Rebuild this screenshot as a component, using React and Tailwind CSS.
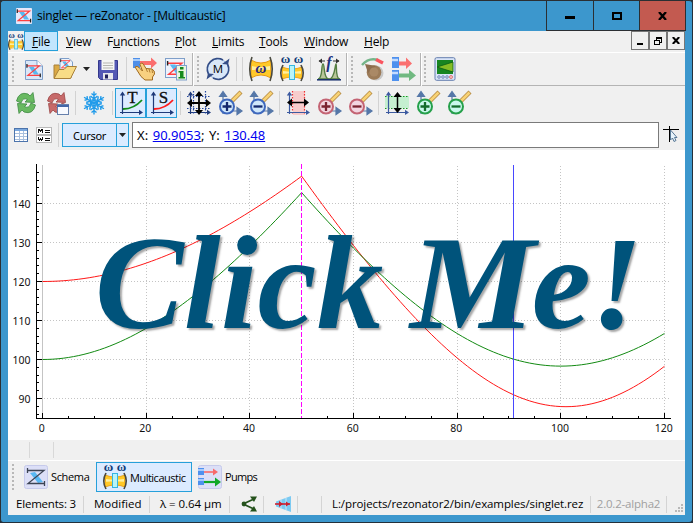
import React from "react";

const NAVY = "#1f3a7a";
const STEEL = "#5577a8";

function Svg({ size = 24, box = 24, children, crisp }) {
  return (
    <svg width={size} height={size} viewBox={`0 0 ${box} ${box}`} fill="none" className="block shrink-0 overflow-visible" shapeRendering={crisp ? "crispEdges" : "auto"}>
      {children}
    </svg>
  );
}

/* ---------- icons ---------- */

function ZMark({ x = 0, y = 0, s = 1, line = "#ff4040", ends = "#222" }) {
  return (
    <g transform={`translate(${x} ${y}) scale(${s})`}>
      <path d="M3 4 L8 4 L13.500 12 L8.500 12Z" fill="#5ab8f0" />
      <path d="M1 3H14L2 13H15" stroke={line} strokeWidth="1.3" />
      <path d="M1 1V5M15 11V15" stroke={ends} strokeWidth="1.3" />
    </g>
  );
}

const AppIcon = () => (
  <Svg size={16} box={16}>
    <rect width="16" height="16" rx="1" fill="#e6e8fb" />
    <ZMark x={0.3} y={0.2} s={0.95} />
  </Svg>
);

function Caustic({ y = 0, h = 24 }) {
  return (
    <g transform={`translate(0 ${y}) scale(1 ${h / 24})`}>
      <path d="M2 3Q12 9 22 3V21Q12 15 2 21Z" fill="#ffc928" stroke="#e89a10" strokeWidth="1" />
      <path d="M3 9Q12 11 21 9V13Q12 12 3 13Z" fill="#fff0a0" />
      <path d="M3 0Q-1.5 12 3 24M21 0Q25.5 12 21 24" stroke="#4a4a40" strokeWidth="1.6" />
    </g>
  );
}

function Omega({ x, y, size = 9 }) {
  return (
    <text x={x} y={y} fontSize={size} textAnchor="middle" fill="#103c78" className="font-['Liberation_Serif',serif] font-bold">ω</text>
  );
}

const MultiIcon = ({ size = 24 }) => (
  <Svg size={size}>
    <Omega x={5.5} y={6} size={13} />
    <Omega x={18.5} y={6} size={13} />
    <Caustic y={8} h={16} />
    <rect x="9.5" y="8.5" width="5" height="14" fill="#b8f4f8" stroke="#35b5e0" />
  </Svg>
);

const CausticIcon = () => (
  <Svg>
    <Caustic />
    <text x="12" y="16" fontSize="15" textAnchor="middle" fill="#24247c" className="font-['Liberation_Serif',serif] font-bold italic">ω</text>
  </Svg>
);

const NewIcon = () => (
  <Svg>
    <path d="M3.500 3.500H15L20.500 9V22.500H3.500Z" fill="#dbe7f8" stroke="#7f9fc9" />
    <path d="M15 3.500V9H20.500" fill="#fff" stroke="#7f9fc9" />
    <ZMark x={4} y={6} s={0.95} />
  </Svg>
);

const OpenIcon = () => (
  <Svg>
    <path d="M1 21V8H6L8 10H18V21Z" fill="#dba943" stroke="#a8803a" />
    <path d="M7 1.500H16L19.500 5V16H7Z" fill="#edf3fc" stroke="#7f9fc9" />
    <ZMark x={7} y={1.500} s={0.72} />
    <path d="M1 21.500L6 12.500H11L14 9.500H23.500L17.500 21.500Z" fill="#f8dc86" stroke="#a8803a" />
  </Svg>
);

const SaveIcon = () => (
  <Svg>
    <path d="M2.500 3.500H21.500V22.500H4.500L2.500 20.500Z" fill="#5458b4" stroke="#34388c" />
    <rect x="5.500" y="3" width="13" height="10" fill="#f6f6f4" />
    <path d="M7 6H17M7 8.500H17M7 11H17" stroke="#b5b5b0" />
    <rect x="7" y="16" width="10" height="6.500" fill="#e8e8ec" />
    <rect x="9" y="17.500" width="3" height="4" fill="#20205c" />
  </Svg>
);

const HandIcon = () => (
  <Svg>
    <rect x="0" y="1" width="7" height="10" fill="#4f8fe8" />
    <path d="M0 3H7" stroke="#a9cdfa" strokeWidth="2" />
    <path d="M7 4H18V0.500L24 6L18 11.500V8H7Z" fill="#fb6e6e" />
    <path d="M2 10Q4 8.500 6 10.500L9.500 14L7 7.500Q8 5 10 6.500L13 11.500L19 12Q22 13.500 21.500 17L19.500 20V23H12L8 19.500Z" fill="#f8d080" stroke="#a06a20" />
    <path d="M13 11.500L14.500 15M16 12L17 15.500M19 12.500L19.500 16" stroke="#a06a20" strokeWidth=".8" />
  </Svg>
);

const InfoIcon = () => (
  <Svg>
    <rect x="1.500" y="1.500" width="19" height="19" fill="#eef2fc" stroke="#7f9fc9" />
    <ZMark x={2.500} y={3} s={1.1} />
    <rect x="12.500" y="8.500" width="10" height="14.500" fill="#e9f6df" stroke="#7f9fc9" />
    <path d="M16 10H19.500V12.500H16ZM14.500 14H19.500V20H21V21.500H14.500V20H16V15.500H14.500Z" fill="#158a1c" />
  </Svg>
);

const MatrixIcon = () => (
  <Svg>
    <circle cx="12" cy="12" r="10.200" fill="#d9e7f8" stroke="#8fb0dc" />
    <path d="M2.500 17A10.500 10.500 0 0 1 17 3" stroke="#344d86" strokeWidth="1.700" />
    <path d="M21.500 7A10.500 10.500 0 0 1 7 21" stroke="#344d86" strokeWidth="1.700" />
    <path d="M16 7L22 7.500L23.500 1.500ZM8 17L2 16.500L.5 22.500Z" fill="#344d86" />
    <text x="12" y="16" fontSize="11.500" textAnchor="middle" fill="#000" className="font-['Open_Sans',sans-serif]">M</text>
  </Svg>
);

const FreqIcon = () => (
  <Svg>
    <path d="M1 22C6 22 4 7 6 7S6 22 12 22S18 7 19 7S18 22 23 22Z" fill="#b9c69a" stroke="#547e42" strokeWidth="1.400" />
    <path d="M0 22.800H24" stroke="#152c6c" strokeWidth="1.500" />
    <path d="M2 4H8M16 4H22" stroke="#333" />
    <path d="M5 1.500L1.500 4L5 6.500M19 1.500L22.500 4L19 6.500" fill="#333" />
    <text x="12" y="11" fontSize="16" textAnchor="middle" fill="#1e3280" className="font-['Liberation_Serif',serif] font-bold italic">f</text>
  </Svg>
);

const KnobIcon = () => (
  <Svg>
    <path d="M1 8Q8 0 17 3" stroke="#75b58a" strokeWidth="2.400" />
    <path d="M15 2.500L22 6" stroke="#fa5560" strokeWidth="3.500" />
    <circle cx="15" cy="16" r="7.500" fill="#c8c8c8" />
    <circle cx="13" cy="15.500" r="7.300" fill="#9c7b58" />
    <path d="M4 7L15 9L7 16Z" fill="#8d6d4d" />
    <circle cx="13" cy="15" r="4.500" fill="#aa8966" />
  </Svg>
);

const PumpsIcon = () => (
  <Svg>
    <rect x="0" y="0" width="7" height="11" fill="#4e91ee" />
    <rect x="0" y="13" width="7" height="11" fill="#4e91ee" />
    <path d="M0 3H6M0 16H6" stroke="#c4dcff" strokeWidth="2.500" />
    <path d="M7 4.500H14V.5L20 6.500L14 12V8.500H7Z" fill="#fa7070" />
    <path d="M7 16.500H17V12.500L24 18.500L17 24V20.500H7Z" fill="#70b981" />
  </Svg>
);

const ScopeIcon = () => (
  <Svg>
    <rect x="2" y=".7" width="20" height="22.600" rx="1.500" fill="#d9e4f8" stroke="#657eae" />
    <rect x="4" y="3" width="16" height="14" fill="#178521" />
    <path d="M4 10L20 5V15Z" fill="#84bd25" stroke="#075f13" strokeWidth=".8" />
    {[6, 10, 14].map((x) => <circle key={x} cx={x} cy="20" r="1.300" stroke="#5c75a8" strokeWidth=".8" />)}
    <circle cx="18" cy="20" r="1.500" fill="#f8c8c8" stroke="#e05f5f" strokeWidth=".8" />
  </Svg>
);

function RefreshIcon({ a, b, win }) {
  return (
    <Svg>
      <path d="M2.500 10Q5 0 14 3L16 5L19 1.500L20.500 11.500L11 11L13.500 8.500Q9 6 7 12Z" fill={a} stroke={b} strokeWidth=".8" />
      <path d="M21.500 14Q19 24 10 21L8 19L5 22.500L3.500 12.500L13 13L10.500 15.500Q15 18 17 12Z" fill={a} stroke={b} strokeWidth=".8" />
      {win && (
        <>
          <rect x="12.500" y="13.500" width="11" height="10" fill="#f8faff" stroke="#6680ac" />
          <path d="M12 15H24" stroke="#4468a8" strokeWidth="2" />
        </>
      )}
    </Svg>
  );
}

const SnowIcon = () => (
  <Svg>
    {[0, 60, 120, 180, 240, 300].map((a) => (
      <path key={a} transform={`rotate(${a} 12 12)`} d="M12 12V.5M12 8L8.500 5M12 8L15.500 5M12 4.500L9.500 2.500M12 4.500L14.500 2.500M12 10L10 8.500M12 10L14 8.500" stroke="#209bea" strokeWidth="1.400" />
    ))}
  </Svg>
);

function Axes({ c = NAVY }) {
  return (
    <>
      <path d="M3.500 3V23M1 21.500H22" stroke={c} strokeWidth="1.200" />
      <path d="M.8 4.500L3.500 .5L6.200 4.500ZM20 18.800L24 21.500L20 24Z" fill={c} />
    </>
  );
}

function LetterIcon({ letter, curve }) {
  return (
    <Svg>
      <Axes />
      <path d="M4 18Q15 18 23 9" stroke={curve} strokeWidth="1.800" />
      <text x="13.500" y="12" fontSize="17" textAnchor="middle" fill="#111" stroke="#111" strokeWidth=".3" className="font-['Liberation_Serif',serif]">{letter}</text>
    </Svg>
  );
}

const FitAllIcon = () => (
  <Svg>
    <Axes />
    <path d="M6.500 0V24M18.500 0V24M0 5.500H24M0 17.500H24" stroke="#2548a0" strokeWidth="1.200" strokeDasharray="1.500 1.500" />
    <path d="M12 2V22M2 12H22" stroke="#000" strokeWidth="1.800" />
    <path d="M8 5L12 0L16 5ZM8 19L12 24L16 19ZM5 8L0 12L5 16ZM19 8L24 12L19 16Z" fill="#000" />
  </Svg>
);

const FitXIcon = () => (
  <Svg>
    <rect x="7" y="0" width="12" height="24" fill="#f7cccc" />
    <path d="M6.500 0V24M18.500 0V24" stroke="#f03030" strokeWidth="1.200" strokeDasharray="1.500 1.500" />
    <Axes c="#3c5aa0" />
    <path d="M3 11.500H21" stroke="#000" strokeWidth="1.500" />
    <path d="M6 7.500L1 11.500L6 15.500ZM18 7.500L23 11.500L18 15.500Z" fill="#000" />
  </Svg>
);

const FitYIcon = () => (
  <Svg>
    <rect x="0" y="5" width="24" height="12" fill="#c5efd0" />
    <path d="M0 5.500H24M0 17.500H24" stroke="#159a20" strokeWidth="1.200" strokeDasharray="1.500 1.500" />
    <Axes c="#3c5aa0" />
    <path d="M12.500 3V20" stroke="#000" strokeWidth="1.500" />
    <path d="M8.500 6L12.500 1L16.500 6ZM8.500 17L12.500 22L16.500 17Z" fill="#000" />
  </Svg>
);

function ZoomIcon({ plus, ring, fill, sign }) {
  return (
    <Svg>
      <path d="M5 23V5M1.500 5.500L5 .5L8.500 5.500Z" stroke={STEEL} fill={STEEL} strokeWidth="1.200" />
      <path d="M3 20H21M19 16.500L24 20L19 23.500Z" stroke={STEEL} fill={STEEL} strokeWidth="1.200" />
      <path d="M14 10L23 1" stroke="#b58a40" strokeWidth="4.200" />
      <path d="M14 10L22.500 1.500" stroke="#f8d274" strokeWidth="2.600" />
      <circle cx="9" cy="15.500" r="7" fill={fill} stroke={ring} strokeWidth="2" />
      <path d={plus ? "M4.500 15.500H13.500M9 11V20" : "M4.500 15.500H13.500"} stroke={sign} strokeWidth="2.300" />
    </Svg>
  );
}

function ZoomXIcon({ plus }) {
  return (
    <Svg>
      <path d="M3 20H21M19 16.500L24 20L19 23.500Z" stroke={STEEL} fill={STEEL} strokeWidth="1.200" />
      <path d="M14 10L23 1" stroke="#b58a40" strokeWidth="4.200" />
      <path d="M14 10L22.500 1.500" stroke="#f8d274" strokeWidth="2.600" />
      <circle cx="9" cy="15.500" r="7" fill="#f2d5e0" stroke="#c46474" strokeWidth="2" />
      <path d={plus ? "M4.500 15.500H13.500M9 11V20" : "M4.500 15.500H13.500"} stroke="#7a2330" strokeWidth="2.300" />
    </Svg>
  );
}

function ZoomYIcon({ plus }) {
  return (
    <Svg>
      <path d="M5 23V5M1.500 5.500L5 .5L8.500 5.500Z" stroke={STEEL} fill={STEEL} strokeWidth="1.200" />
      <path d="M14 10L23 1" stroke="#b58a40" strokeWidth="4.200" />
      <path d="M14 10L22.500 1.500" stroke="#f8d274" strokeWidth="2.600" />
      <circle cx="9" cy="15.500" r="7" fill="#c9f8ec" stroke="#25a04a" strokeWidth="2" />
      <path d={plus ? "M4.500 15.500H13.500M9 11V20" : "M4.500 15.500H13.500"} stroke="#136d2c" strokeWidth="2.300" />
    </Svg>
  );
}

const TableIcon = () => (
  <Svg size={14} box={14} crisp>
    <rect x="0" y="0" width="14" height="14" fill="#fff" />
    <path d="M.5 .5H13.500V13.500H.5Z" stroke="#4c74ac" />
    <path d="M1 2H13" stroke="#7aa8de" strokeWidth="2" />
    <path d="M5.500 3V13M9.500 3V13M1 5.500H13M1 8.500H13M1 11.500H13" stroke="#a9c0de" />
  </Svg>
);

const FormulaIcon = () => (
  <Svg size={16} box={16} crisp>
    <path d="M.5 .5H15.500V7.500H.5ZM.5 8.500H15.500V15.500H.5Z" fill="#fff" stroke="#b8b8b8" />
    <path d="M2.500 6V2M3.500 2V4M4.500 3V5M5.500 2V4M6.500 6V2M2.500 10V13M3.500 12V14M4.500 11V13M5.500 12V14M6.500 10V13M9 3.500H14M9 5.500H14M9 11.500H14M9 13.500H14" stroke="#111" />
  </Svg>
);

const CrossCursorIcon = () => (
  <Svg size={18} box={18}>
    <path d="M0 3.500H16M6.500 0V16" stroke="#000" strokeWidth="1" shapeRendering="crispEdges" />
    <path d="M7.500 4V14L9.500 12L11 15.500L13 14.500L11.500 11.500H14Z" fill="#e8f4fc" stroke="#4a6c8c" strokeWidth=".9" />
  </Svg>
);

const SchemaIcon = () => (
  <Svg>
    <rect x=".5" y=".5" width="23" height="23" rx="2" fill="#dcdff7" stroke="#c6caeb" />
    <path d="M6 8L11 7L19 17L14 18Z" fill="#58b8f4" />
    <path d="M3 5.500H20L4 18.500H21M3.500 3V8M20.500 16V21" stroke="#3c4454" strokeWidth="1.300" />
  </Svg>
);

const PumpsTabIcon = () => (
  <Svg>
    <rect x=".5" y=".5" width="23" height="23" rx="2" fill="#dcdff7" stroke="#c6caeb" />
    <path d="M0 3H6V10H0ZM0 13H6V20H0Z" fill="#4e91ee" />
    <path d="M0 5H6M0 15H6" stroke="#c4dcff" strokeWidth="1.500" />
    <path d="M6 7H16" stroke="#f86a6a" strokeWidth="1.600" />
    <path d="M6 17H18" stroke="#12a828" strokeWidth="2.200" />
    <path d="M15 3.500L20 7L15 10.500Z" fill="#f86a6a" />
    <path d="M17 12.500L23 17L17 21.500Z" fill="#12a828" />
  </Svg>
);

const ShareIcon = () => (
  <Svg size={16} box={16}>
    <path d="M2 8L13 3M2 8L13 13" stroke="#24521c" strokeWidth="1.800" />
    <circle cx="3" cy="8" r="2.400" fill="#24521c" />
    <path d="M9 .5H16L13 6ZM9 15.500H16L13 10Z" fill="#24521c" />
  </Svg>
);

const BeamIcon = () => (
  <Svg size={16} box={16}>
    <path d="M1 5.500L16 0V16L1 10.500Z" fill="#7ccaf2" />
    <path d="M6 3.500V12.500M11 2V14" stroke="#c5e8fa" />
    <path d="M0 8H15" stroke="#cc2030" strokeWidth="1.600" />
    <path d="M4 5L8 8L4 11ZM11 5.500L14.500 8L11 10.500Z" fill="#cc2030" />
  </Svg>
);

/* ---------- toolbar parts ---------- */

const Slot = ({ children, on }) => (
  <div className={`flex h-[30px] w-[31px] shrink-0 items-center justify-center ${on ? "border border-[#26a0da] bg-[#dcebff]" : ""}`}>{children}</div>
);
const Sep = () => (
  <div className="flex w-[6px] shrink-0 justify-center"><div className="h-6 w-px bg-[#d2d2d2]" /></div>
);
const Handle = ({ className }) => (
  <div className={`h-[26px] shrink-0 border-l-2 border-dotted border-[#b8b8b8] ${className}`} />
);
const BarEnd = () => (
  <div className="flex h-[33px] w-[2px] shrink-0"><div className="w-px bg-[#b4b4b4]" /><div className="w-px bg-white" /></div>
);
const Caret = () => <svg width="7" height="4" viewBox="0 0 7 4" className="shrink-0"><path d="M0 0H7L3.500 4Z" fill="#222" /></svg>;

const menus = [
  ["V", "iew", "w-[41px]"],
  ["F", "unctions", "w-[68px]", "u"],
  ["P", "lot", "w-[37px]"],
  ["L", "imits", "w-[47px]"],
  ["T", "ools", "w-[45px]"],
  ["W", "indow", "w-[60px]"],
  ["H", "elp", "w-[40px]"],
];

/* ---------- chart ---------- */

const px = (v) => 34.5 + v * 5.183;
const py = (v) => 53.5 + (140 - v) * 3.9;
function curve(segments) {
  const pts = [];
  for (const [from, to, waist, center, zr2] of segments) {
    for (let x = from; x <= to; x += 1) {
      const v = waist * Math.sqrt(1 + (x - center) ** 2 / zr2);
      pts.push(`${px(x).toFixed(2)},${py(v).toFixed(2)}`);
    }
  }
  return pts.join(" ");
}
const redCurve = curve([[0, 50, 120, 0, 4994], [51, 120, 87.9, 101, 1447]]);
const greenCurve = curve([[0, 50, 100, 0, 2406], [51, 120, 98.3, 100, 2252]]);
const range = (a, b, s) => Array.from({ length: Math.floor((b - a) / s) + 1 }, (_, i) => a + i * s);
const snap = (v) => Math.floor(v) + 0.5;

function Chart() {
  return (
    <svg width="677" height="290" className="block">
      <g shapeRendering="crispEdges">
        {[90, 100, 110, 120, 130, 140].map((v) => (
          <path key={v} d={`M36 ${snap(py(v))}H663`} stroke="#c4c4c4" strokeDasharray="1 2" />
        ))}
        {[20, 40, 60, 80, 100, 120].map((v) => (
          <path key={v} d={`M${snap(px(v))} 16V268`} stroke="#c4c4c4" strokeDasharray="1 2" />
        ))}
        <path d="M34.500 15V268" stroke="#c4c4c4" />
      </g>
      <polyline points={redCurve} fill="none" stroke="#ff1818" strokeWidth="1" />
      <polyline points={greenCurve} fill="none" stroke="#128a12" strokeWidth="1" />
      <g shapeRendering="crispEdges" stroke="#000">
        <path d="M28.500 14V268.500H663" fill="none" />
        {range(86, 148, 2).map((v) => (
          <path key={v} d={`M29 ${snap(py(v))}h${v % 10 === 0 ? 5 : 2}`} />
        ))}
        {range(0, 120, 5).map((v) => (
          <path key={v} d={`M${snap(px(v))} 268v${v % 20 === 0 ? -5 : -2}`} />
        ))}
        <path d="M293.500 14V268" stroke="#ff00ff" strokeDasharray="5 2" />
        <path d="M505.500 15V268" stroke="#4848ff" />
      </g>
      <g fill="#111" className="font-['Noto_Sans','Open_Sans',sans-serif] text-[10.500px]">
        {[90, 100, 110, 120, 130, 140].map((v) => (
          <text key={v} x="22.500" y={py(v) + 4} textAnchor="end">{v}</text>
        ))}
        {[0, 20, 40, 60, 80, 100, 120].map((v) => (
          <text key={v} x={px(v) - 0.8} y="282" textAnchor="middle">{v}</text>
        ))}
      </g>
    </svg>
  );
}

const StatusSep = () => <div className="h-[17px] w-px shrink-0 bg-[#d4d4d4]" />;

export default function App() {
  return (
    <div className="h-[523px] w-[693px] overflow-hidden bg-[#24303a] font-['Open_Sans','Noto_Sans',sans-serif] text-[12px] text-black">
      <div className="flex h-[522px] w-[692px] flex-col rounded-[3px] border-l border-t border-[#2b2f33] bg-[#3c97cd] pb-[7px] pl-[7px] pr-[7px]">
        {/* title bar */}
        <header className="flex h-[30px] shrink-0">
          <div className="flex flex-1 items-center pl-[8px]">
            <AppIcon />
            <span className="ml-[5px] whitespace-pre text-[12px] tracking-[-0.210px]">singlet — reZonator - [Multicaustic]</span>
          </div>
          <div className="-mr-px flex h-[30px] w-[140px] border-x border-b border-[#2b2f33]">
            <div className="flex w-[47px] items-center justify-center border-r border-[#2b2f33]"><div className="mt-[4px] h-[3px] w-[10px] bg-black" /></div>
            <div className="flex w-[46px] items-center justify-center border-r border-[#2b2f33]"><div className="h-[8px] w-[10px] border-2 border-black" /></div>
            <div className="flex flex-1 items-center justify-center bg-[#c35a50]">
              <svg width="9" height="8" viewBox="0 0 9 8"><path d="M1 0L8 8M8 0L1 8" stroke="#000" strokeWidth="2.300" /></svg>
            </div>
          </div>
        </header>

        <main className="flex min-h-0 flex-1 flex-col bg-[#f0f0f0]">
          {/* menu */}
          <nav className="flex h-[22px] shrink-0 border-b border-white text-[12px] tracking-[-0.200px]">
            <div className="flex w-4 items-center"><MultiIcon size={16} /></div>
            <div className="mr-[8px] flex h-5 w-[34px] items-center justify-center border border-[#26a0da] bg-[#c2e5fd] pt-[2px]"><span><u>F</u>ile</span></div>
            {menus.map(([a, b, w, mid]) => (
              <div key={a + b} className={`flex h-[22px] shrink-0 items-center ${w}`}>
                <span>{mid ? <>F<u>u</u>nctions</> : <><u>{a}</u>{b}</>}</span>
              </div>
            ))}
            <div className="ml-auto flex h-[19px]">
              <div className="flex w-[18px] items-end justify-center border border-[#777] pb-[4px]"><div className="h-[2px] w-[6px] bg-black" /></div>
              <div className="flex w-[18px] items-center justify-center border border-[#777]">
                <svg width="8" height="8" viewBox="0 0 8 8" shapeRendering="crispEdges" fill="none" stroke="#000"><path d="M2 1H8M2.500 1V3M7.500 1V5.500H6" strokeWidth="1" /><path d="M0 3.500H6M.5 3V7.500H5.500V3" /><path d="M2 .5H8" strokeWidth="1" /></svg>
              </div>
              <div className="flex w-[18px] items-center justify-center border border-[#777]">
                <svg width="8" height="7" viewBox="0 0 8 7"><path d="M.8 0L7.200 7M7.200 0L.8 7" stroke="#000" strokeWidth="2" /></svg>
              </div>
            </div>
          </nav>

          {/* main toolbar */}
          <div className="flex h-[33px] shrink-0 items-center border-b border-[#b4b4b4]">
            <Handle className="ml-[4px] w-[6px]" />
            <Slot><NewIcon /></Slot>
            <Slot><OpenIcon /></Slot>
            <div className="flex w-3 items-center justify-center"><Caret /></div>
            <Slot><SaveIcon /></Slot>
            <Sep />
            <Slot><HandIcon /></Slot>
            <Slot><InfoIcon /></Slot>
            <div className="w-px" />
            <BarEnd />
            <Handle className="ml-[3px] w-[5px]" />
            <Slot><MatrixIcon /></Slot>
            <Sep /><Sep />
            <Slot><CausticIcon /></Slot>
            <Slot><MultiIcon /></Slot>
            <Sep />
            <Slot><FreqIcon /></Slot>
            <div className="w-[2px]" />
            <BarEnd />
            <Handle className="ml-[3px] w-[6px]" />
            <Slot><KnobIcon /></Slot>
            <Slot><PumpsIcon /></Slot>
            <div className="w-px" />
            <BarEnd />
            <Handle className="ml-[2px] w-[5px]" />
            <Slot><ScopeIcon /></Slot>
          </div>

          {/* plot toolbar */}
          <div className="flex h-[34px] shrink-0 items-center pl-[2px]">
            <Slot><RefreshIcon a="#69b961" b="#3d8a43" /></Slot>
            <Slot><RefreshIcon a="#c76a6a" b="#9a4545" win /></Slot>
            <Sep />
            <Slot><SnowIcon /></Slot>
            <Sep />
            <Slot on><LetterIcon letter="T" curve="#118a18" /></Slot>
            <Slot on><LetterIcon letter="S" curve="#ff1c1c" /></Slot>
            <Sep />
            <Slot><FitAllIcon /></Slot>
            <Slot><ZoomIcon plus ring="#3e68bd" fill="#d0e8fb" sign="#14286c" /></Slot>
            <Slot><ZoomIcon ring="#3e68bd" fill="#d0e8fb" sign="#14286c" /></Slot>
            <Sep />
            <Slot><FitXIcon /></Slot>
            <Slot><ZoomXIcon plus /></Slot>
            <Slot><ZoomXIcon /></Slot>
            <Sep />
            <Slot><FitYIcon /></Slot>
            <Slot><ZoomYIcon plus /></Slot>
            <Slot><ZoomYIcon /></Slot>
          </div>

          {/* cursor bar */}
          <div className="flex h-[30px] shrink-0 items-center">
            <div className="ml-[6px] w-[22px]"><TableIcon /></div>
            <FormulaIcon />
            <div className="ml-[3px]"><Sep /></div>
            <div className="ml-px flex h-6 w-[67px] border border-[#26a0da] bg-[#dcebff]">
              <div className="flex flex-1 items-center justify-center border-r border-[#26a0da] pt-[2px] font-['Noto_Sans','Open_Sans',sans-serif] text-[11px] tracking-[-0.300px]">Cursor</div>
              <div className="flex w-[11px] items-center justify-center"><Caret /></div>
            </div>
            <div className="ml-[3px] flex h-[26px] w-[527px] items-center border border-[#7a7a7a] bg-white pl-[4px] pt-px font-['Noto_Sans','Open_Sans',sans-serif] text-[13px]">
              <span className="whitespace-pre tracking-[0.010px] [word-spacing:1.200px]">X: <u className="text-[#0000f0]">90.9053</u>; Y: <u className="text-[#0000f0]">130.48</u></span>
            </div>
            <div className="ml-[4px]"><CrossCursorIcon /></div>
          </div>

          {/* plot */}
          <section className="relative h-[290px] shrink-0 bg-white">
            <Chart />
            <div className="absolute left-[87px] top-[58px] whitespace-pre font-['Liberation_Serif',serif] text-[133px] font-bold italic leading-[150px] text-[#00537b] [text-shadow:2px_2px_2px_rgba(0,0,0,0.350)]">Click<span className="ml-[-6px]"> </span><span className="inline-block origin-left scale-x-[1.060]">M</span><span className="ml-[3px]">e</span>!</div>
          </section>

          <div className="flex h-[21px] shrink-0 items-center border-b border-white">
            <div className="ml-[21px] h-4 w-px bg-[#d8d8d8]" />
            <div className="ml-[23px] h-4 w-px bg-[#d8d8d8]" />
          </div>

          {/* window tabs */}
          <div className="flex h-[32px] shrink-0 items-center text-[11px] tracking-[-0.200px]">
            <Handle className="ml-[4px] w-[12px]" />
            <SchemaIcon />
            <span className="ml-[3px] w-[45px] pt-px tracking-[-0.350px]">Schema</span>
            <div className="flex h-[30px] w-[96px] items-center border border-[#26a0da] bg-[#dcebff] pl-[6px]">
              <MultiIcon />
              <span className="ml-[3px] pt-[2px] tracking-[-0.500px]">Multicaustic</span>
            </div>
            <div className="ml-[6px]"><PumpsTabIcon /></div>
            <span className="ml-[3px] pt-px tracking-[-0.700px]">Pumps</span>
          </div>

          {/* status */}
          <footer className="flex min-h-0 flex-1 items-center whitespace-pre text-[11.500px] tracking-[-0.200px]">
            <span className="w-[75px] shrink-0 pl-[8px]">Elements: 3</span><StatusSep />
            <span className="w-[65px] shrink-0 pl-[10px] tracking-[0px]">Modified</span><StatusSep />
            <span className="w-[79px] shrink-0 pl-[10px] tracking-[-0.060px]">λ = 0.64 µm</span><StatusSep />
            <div className="flex w-[33px] shrink-0 justify-center pl-1"><ShareIcon /></div><StatusSep />
            <div className="flex w-[33px] shrink-0 justify-center pl-1"><BeamIcon /></div><StatusSep />
            <div className="w-[23px] shrink-0" /><StatusSep />
            <span className="w-[268px] shrink-0 pl-[10px] tracking-[-0.090px]">L:/projects/rezonator2/bin/examples/singlet.rez</span>
            <StatusSep />
            <span className="w-[75px] shrink-0 text-center text-[#a0a0a0]">2.0.2-alpha2</span><StatusSep />
            <svg width="8" height="8" className="ml-[8px] mt-2 shrink-0" fill="#b8b8b8"><path d="M6 0h2v2h-2zM3 3h2v2h-2zM6 3h2v2h-2zM0 6h2v2h-2zM3 6h2v2h-2zM6 6h2v2h-2z" /></svg>
          </footer>
        </main>
      </div>
    </div>
  );
}
